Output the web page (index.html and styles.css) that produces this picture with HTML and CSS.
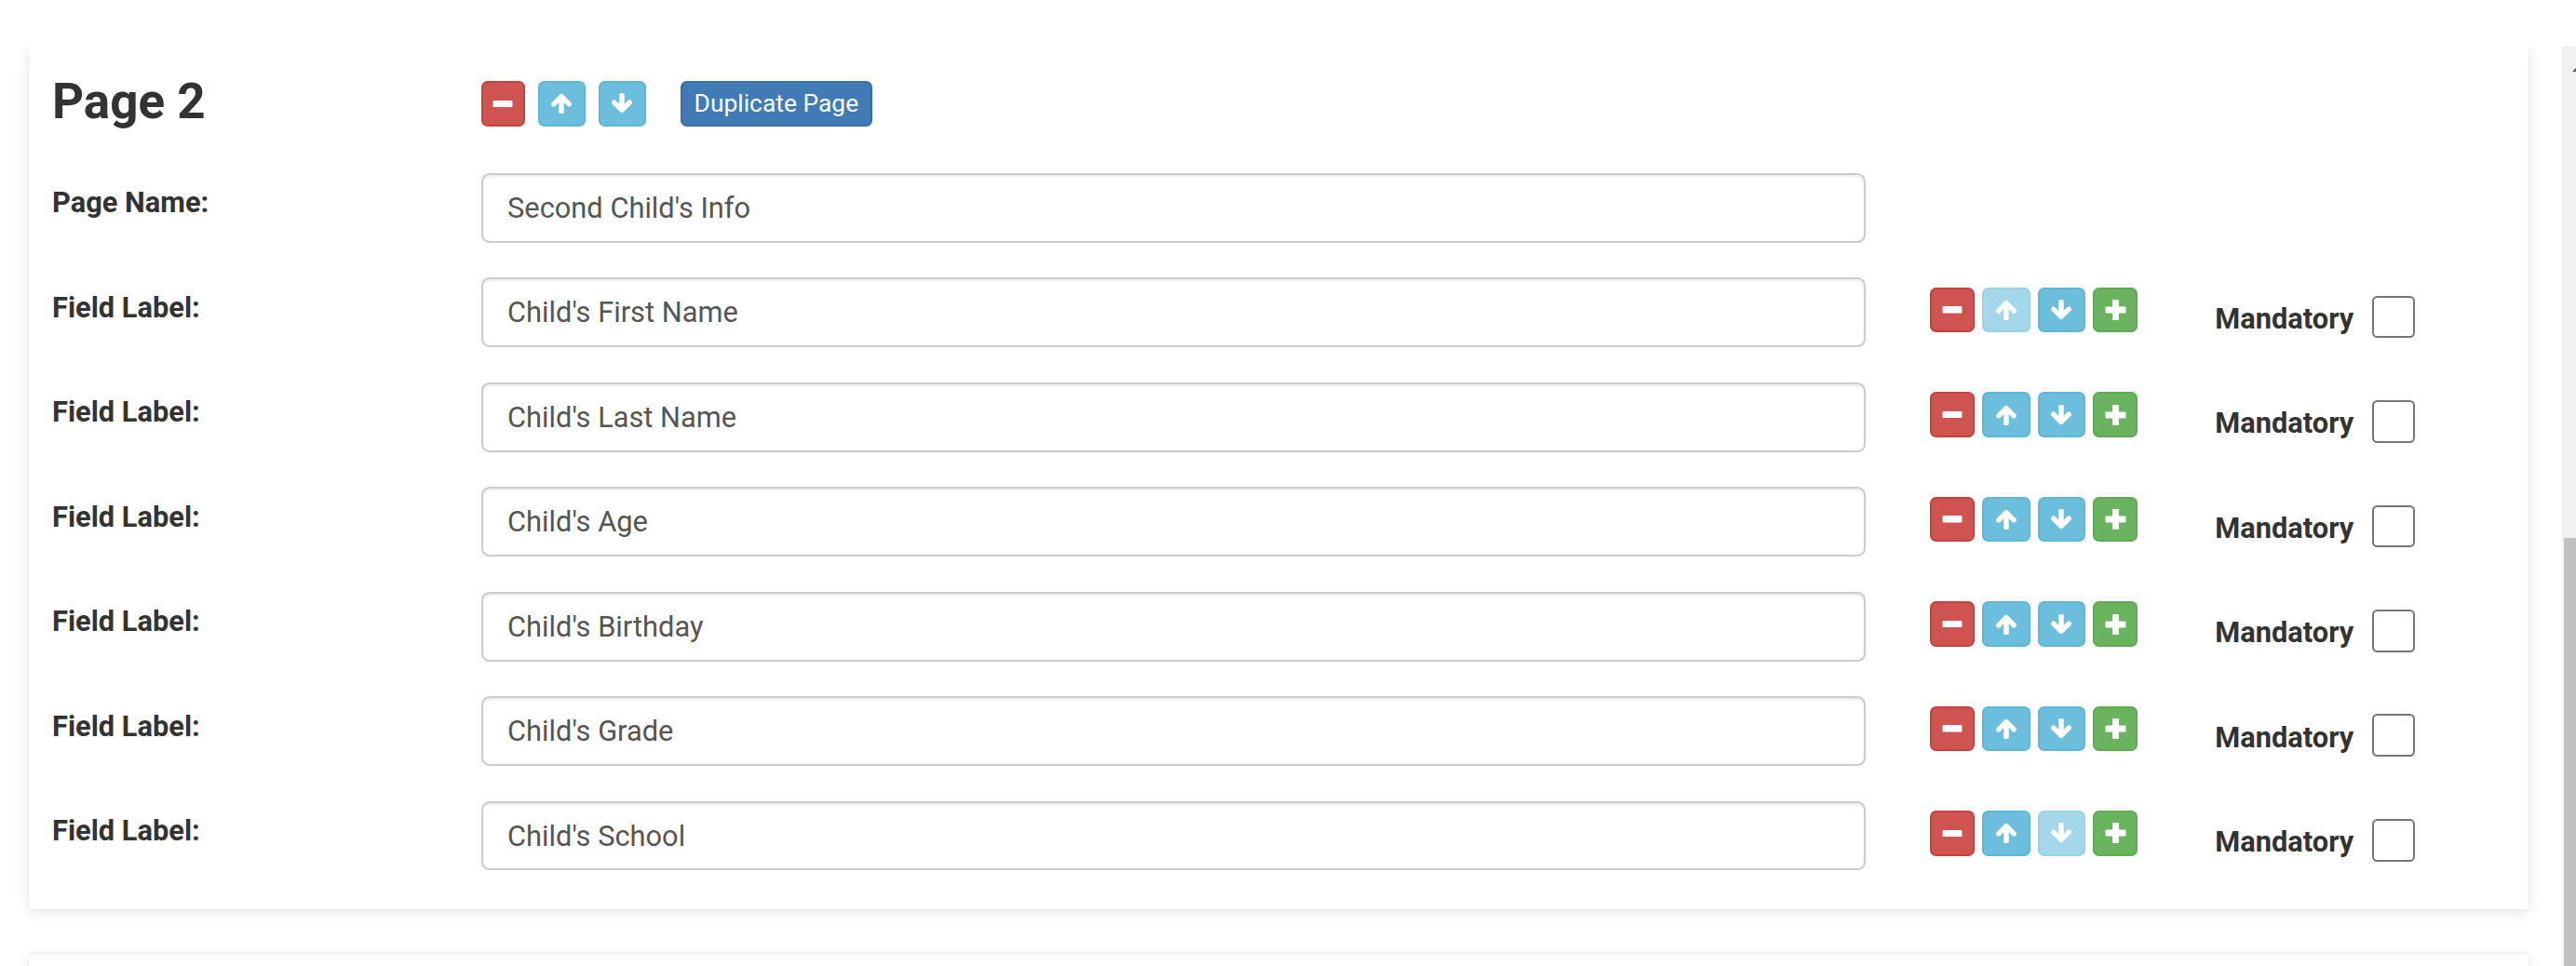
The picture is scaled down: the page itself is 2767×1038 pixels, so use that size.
FILE: index.html
```html
<!DOCTYPE html>
<html lang="en">
<head>
<meta charset="utf-8">
<title>Page 2</title>
<link rel="stylesheet" href="styles.css">
</head>
<body>
<div class="topbar"></div>
<div class="main">
  <div class="viewport">
    <section class="card">
      <div class="grid head">
        <h3 class="title">Page 2</h3>
        <div class="head-btns">
          <button class="btn btn-danger w-minus" type="button"><svg class="ic-minus" viewBox="0 0 22 8"><rect x="0" y="0" width="22" height="8" rx="1.2" fill="#fff"/></svg></button>
          <button class="btn btn-info w-arrow" type="button"><svg class="ic-arrow" viewBox="0 0 24 22"><path d="M12 20V4.5M3.8 11.8L12 3.6l8.2 8.2" fill="none" stroke="#fff" stroke-width="5.4" stroke-linecap="round" stroke-linejoin="round"/></svg></button>
          <button class="btn btn-info w-arrow" type="button"><svg class="ic-arrow" viewBox="0 0 24 22"><path d="M12 2v15.5M3.8 10.2L12 18.4l8.2-8.2" fill="none" stroke="#fff" stroke-width="5.4" stroke-linecap="round" stroke-linejoin="round"/></svg></button>
          <button class="btn btn-primary dup" type="button">Duplicate Page</button>
        </div>
      </div>

      <div class="grid row">
        <label class="lbl">Page Name:</label>
        <input class="field" type="text" value="Second Child's Info">
      </div>

      <div class="grid row">
        <label class="lbl">Field Label:</label>
        <input class="field" type="text" value="Child's First Name">
        <div class="row-btns">
          <button class="btn btn-danger w-minus" type="button"><svg class="ic-minus" viewBox="0 0 22 8"><rect width="22" height="8" rx="1.2" fill="#fff"/></svg></button>
          <button class="btn btn-info w-arrow disabled" type="button"><svg class="ic-arrow" viewBox="0 0 24 22"><path d="M12 20V4.5M3.8 11.8L12 3.6l8.2 8.2" fill="none" stroke="#fff" stroke-width="5.4" stroke-linecap="round" stroke-linejoin="round"/></svg></button>
          <button class="btn btn-info w-arrow" type="button"><svg class="ic-arrow" viewBox="0 0 24 22"><path d="M12 2v15.5M3.8 10.2L12 18.4l8.2-8.2" fill="none" stroke="#fff" stroke-width="5.4" stroke-linecap="round" stroke-linejoin="round"/></svg></button>
          <button class="btn btn-success w-minus" type="button"><svg class="ic-plus" viewBox="0 0 23 22"><rect x="8" y="0" width="7" height="22" rx="1" fill="#fff"/><rect x="0.5" y="7.5" width="22" height="7" rx="1" fill="#fff"/></svg></button>
        </div>
        <div class="mand"><span class="mand-text">Mandatory</span><span class="check"></span></div>
      </div>

      <div class="grid row">
        <label class="lbl">Field Label:</label>
        <input class="field" type="text" value="Child's Last Name">
        <div class="row-btns">
          <button class="btn btn-danger w-minus" type="button"><svg class="ic-minus" viewBox="0 0 22 8"><rect width="22" height="8" rx="1.2" fill="#fff"/></svg></button>
          <button class="btn btn-info w-arrow" type="button"><svg class="ic-arrow" viewBox="0 0 24 22"><path d="M12 20V4.5M3.8 11.8L12 3.6l8.2 8.2" fill="none" stroke="#fff" stroke-width="5.4" stroke-linecap="round" stroke-linejoin="round"/></svg></button>
          <button class="btn btn-info w-arrow" type="button"><svg class="ic-arrow" viewBox="0 0 24 22"><path d="M12 2v15.5M3.8 10.2L12 18.4l8.2-8.2" fill="none" stroke="#fff" stroke-width="5.4" stroke-linecap="round" stroke-linejoin="round"/></svg></button>
          <button class="btn btn-success w-minus" type="button"><svg class="ic-plus" viewBox="0 0 23 22"><rect x="8" y="0" width="7" height="22" rx="1" fill="#fff"/><rect x="0.5" y="7.5" width="22" height="7" rx="1" fill="#fff"/></svg></button>
        </div>
        <div class="mand"><span class="mand-text">Mandatory</span><span class="check"></span></div>
      </div>

      <div class="grid row">
        <label class="lbl">Field Label:</label>
        <input class="field" type="text" value="Child's Age">
        <div class="row-btns">
          <button class="btn btn-danger w-minus" type="button"><svg class="ic-minus" viewBox="0 0 22 8"><rect width="22" height="8" rx="1.2" fill="#fff"/></svg></button>
          <button class="btn btn-info w-arrow" type="button"><svg class="ic-arrow" viewBox="0 0 24 22"><path d="M12 20V4.5M3.8 11.8L12 3.6l8.2 8.2" fill="none" stroke="#fff" stroke-width="5.4" stroke-linecap="round" stroke-linejoin="round"/></svg></button>
          <button class="btn btn-info w-arrow" type="button"><svg class="ic-arrow" viewBox="0 0 24 22"><path d="M12 2v15.5M3.8 10.2L12 18.4l8.2-8.2" fill="none" stroke="#fff" stroke-width="5.4" stroke-linecap="round" stroke-linejoin="round"/></svg></button>
          <button class="btn btn-success w-minus" type="button"><svg class="ic-plus" viewBox="0 0 23 22"><rect x="8" y="0" width="7" height="22" rx="1" fill="#fff"/><rect x="0.5" y="7.5" width="22" height="7" rx="1" fill="#fff"/></svg></button>
        </div>
        <div class="mand"><span class="mand-text">Mandatory</span><span class="check"></span></div>
      </div>

      <div class="grid row">
        <label class="lbl">Field Label:</label>
        <input class="field" type="text" value="Child's Birthday">
        <div class="row-btns">
          <button class="btn btn-danger w-minus" type="button"><svg class="ic-minus" viewBox="0 0 22 8"><rect width="22" height="8" rx="1.2" fill="#fff"/></svg></button>
          <button class="btn btn-info w-arrow" type="button"><svg class="ic-arrow" viewBox="0 0 24 22"><path d="M12 20V4.5M3.8 11.8L12 3.6l8.2 8.2" fill="none" stroke="#fff" stroke-width="5.4" stroke-linecap="round" stroke-linejoin="round"/></svg></button>
          <button class="btn btn-info w-arrow" type="button"><svg class="ic-arrow" viewBox="0 0 24 22"><path d="M12 2v15.5M3.8 10.2L12 18.4l8.2-8.2" fill="none" stroke="#fff" stroke-width="5.4" stroke-linecap="round" stroke-linejoin="round"/></svg></button>
          <button class="btn btn-success w-minus" type="button"><svg class="ic-plus" viewBox="0 0 23 22"><rect x="8" y="0" width="7" height="22" rx="1" fill="#fff"/><rect x="0.5" y="7.5" width="22" height="7" rx="1" fill="#fff"/></svg></button>
        </div>
        <div class="mand"><span class="mand-text">Mandatory</span><span class="check"></span></div>
      </div>

      <div class="grid row">
        <label class="lbl">Field Label:</label>
        <input class="field" type="text" value="Child's Grade">
        <div class="row-btns">
          <button class="btn btn-danger w-minus" type="button"><svg class="ic-minus" viewBox="0 0 22 8"><rect width="22" height="8" rx="1.2" fill="#fff"/></svg></button>
          <button class="btn btn-info w-arrow" type="button"><svg class="ic-arrow" viewBox="0 0 24 22"><path d="M12 20V4.5M3.8 11.8L12 3.6l8.2 8.2" fill="none" stroke="#fff" stroke-width="5.4" stroke-linecap="round" stroke-linejoin="round"/></svg></button>
          <button class="btn btn-info w-arrow" type="button"><svg class="ic-arrow" viewBox="0 0 24 22"><path d="M12 2v15.5M3.8 10.2L12 18.4l8.2-8.2" fill="none" stroke="#fff" stroke-width="5.4" stroke-linecap="round" stroke-linejoin="round"/></svg></button>
          <button class="btn btn-success w-minus" type="button"><svg class="ic-plus" viewBox="0 0 23 22"><rect x="8" y="0" width="7" height="22" rx="1" fill="#fff"/><rect x="0.5" y="7.5" width="22" height="7" rx="1" fill="#fff"/></svg></button>
        </div>
        <div class="mand"><span class="mand-text">Mandatory</span><span class="check"></span></div>
      </div>

      <div class="grid row">
        <label class="lbl">Field Label:</label>
        <input class="field" type="text" value="Child's School">
        <div class="row-btns">
          <button class="btn btn-danger w-minus" type="button"><svg class="ic-minus" viewBox="0 0 22 8"><rect width="22" height="8" rx="1.2" fill="#fff"/></svg></button>
          <button class="btn btn-info w-arrow" type="button"><svg class="ic-arrow" viewBox="0 0 24 22"><path d="M12 20V4.5M3.8 11.8L12 3.6l8.2 8.2" fill="none" stroke="#fff" stroke-width="5.4" stroke-linecap="round" stroke-linejoin="round"/></svg></button>
          <button class="btn btn-info w-arrow disabled" type="button"><svg class="ic-arrow" viewBox="0 0 24 22"><path d="M12 2v15.5M3.8 10.2L12 18.4l8.2-8.2" fill="none" stroke="#fff" stroke-width="5.4" stroke-linecap="round" stroke-linejoin="round"/></svg></button>
          <button class="btn btn-success w-minus" type="button"><svg class="ic-plus" viewBox="0 0 23 22"><rect x="8" y="0" width="7" height="22" rx="1" fill="#fff"/><rect x="0.5" y="7.5" width="22" height="7" rx="1" fill="#fff"/></svg></button>
        </div>
        <div class="mand"><span class="mand-text">Mandatory</span><span class="check"></span></div>
      </div>
    </section>
    <section class="card card-next"></section>
  </div>
  <div class="scrollbar">
    <div class="sb-arrow"><span class="sb-tri"></span></div>
    <div class="sb-track"></div>
    <div class="sb-thumb"></div>
  </div>
</div>
</body>
</html>
```

FILE: styles.css
```css
* { box-sizing: border-box; }

html, body {
  margin: 0;
  padding: 0;
  background: #ffffff;
  height: 1038px;
  overflow: hidden;
}

body {
  font-family: Roboto, "Liberation Sans", Arial, sans-serif;
  color: #333333;
}

.topbar {
  height: 50px;
  background: #ffffff;
}

.main {
  display: flex;
  height: 988px;
}

.viewport {
  flex: 1;
  overflow: hidden;
  padding: 0 36px 0 30.6px;
  background: #ffffff;
}

.card {
  background: #ffffff;
  box-shadow: 0 4px 14px rgba(0, 0, 0, 0.10), 0 0 2px rgba(0, 0, 0, 0.06);
  padding: 29.5px 25.4px 41.5px;
}

.card-next {
  margin-top: 47.3px;
  height: 200px;
  border-top: 1px solid #ececec;
  padding: 0;
}

.grid {
  display: grid;
  grid-template-columns: 460.7px 1487.3px 375.3px auto;
  align-items: start;
}

.head {
  margin-bottom: 48.2px;
}

.title {
  margin: 0;
  font-size: 53px;
  line-height: 58.3px;
  font-weight: 700;
  color: #333333;
}

.head-btns {
  display: flex;
  margin-top: 7.8px;
}

.head-btns .btn + .btn { margin-left: 13.3px; }
.head-btns .btn.dup { margin-left: 36.3px; }

.row {
  margin-bottom: 37.65px;
}
.row:last-child { margin-bottom: 0; }

.lbl {
  display: block;
  font-size: 30.8px;
  line-height: 44px;
  font-weight: 700;
  padding-top: 10.5px;
  color: #333333;
}

.field {
  display: block;
  width: 1487.3px;
  height: 74.8px;
  margin: 0;
  padding: 13.2px 26.4px;
  border: 2.2px solid #cccccc;
  border-radius: 8.8px;
  box-shadow: inset 0 2.2px 2.2px rgba(0, 0, 0, 0.075);
  background: #ffffff;
  font-family: Roboto, "Liberation Sans", Arial, sans-serif;
  font-size: 30.8px;
  line-height: 44px;
  color: #555555;
  outline: none;
}

.row-btns {
  display: flex;
  margin-top: 10.6px;
  padding-left: 69.3px;
}
.row-btns .btn + .btn { margin-left: 8px; }

.btn {
  display: flex;
  align-items: center;
  justify-content: center;
  height: 48.4px;
  padding: 0;
  border: 2.2px solid transparent;
  border-radius: 6.6px;
  font-family: Roboto, "Liberation Sans", Arial, sans-serif;
  cursor: pointer;
}

.w-minus { width: 47.6px; }
.w-arrow { width: 51.7px; }

.btn-danger { background: #cf5350; border-color: #c7423e; }
.btn-info { background: #6bbfdd; border-color: #5db7d8; }
.btn-info.disabled { background: #a4d7e9; border-color: #9ad2e6; }
.btn-success { background: #6bb45f; border-color: #5eab52; }
.btn-primary {
  background: #417bb5;
  border-color: #386fa6;
  color: #ffffff;
  font-size: 26.4px;
  line-height: 39.6px;
  padding: 0 11px;
  width: 206.7px;
}

.ic-minus { width: 22px; height: 7.6px; display: block; }
.ic-arrow { width: 24px; height: 22px; display: block; }
.ic-plus { width: 23px; height: 22px; display: block; }

.mand {
  display: flex;
  align-items: flex-start;
  margin-top: 19.3px;
}

.mand-text {
  font-size: 30.8px;
  line-height: 46px;
  font-weight: 700;
  padding-top: 2.1px;
  color: #333333;
}

.check {
  width: 46.3px;
  height: 45.7px;
  margin-left: 19.4px;
  border: 2.5px solid #767676;
  border-radius: 5.5px;
  background: #ffffff;
}

.scrollbar {
  width: 15px;
  display: flex;
  flex-direction: column;
  background: #f1f1f1;
}

.sb-arrow {
  height: 30px;
  display: flex;
  justify-content: flex-end;
  align-items: flex-end;
  padding-bottom: 3px;
}

.sb-tri {
  width: 0;
  height: 0;
  border-left: 4px solid transparent;
  border-right: 0 solid transparent;
  border-bottom: 4px solid #505050;
  margin-right: 0;
}

.sb-track {
  height: 498px;
}

.sb-thumb {
  flex: 1;
  margin-left: 2px;
  background: #c1c1c1;
}
```
